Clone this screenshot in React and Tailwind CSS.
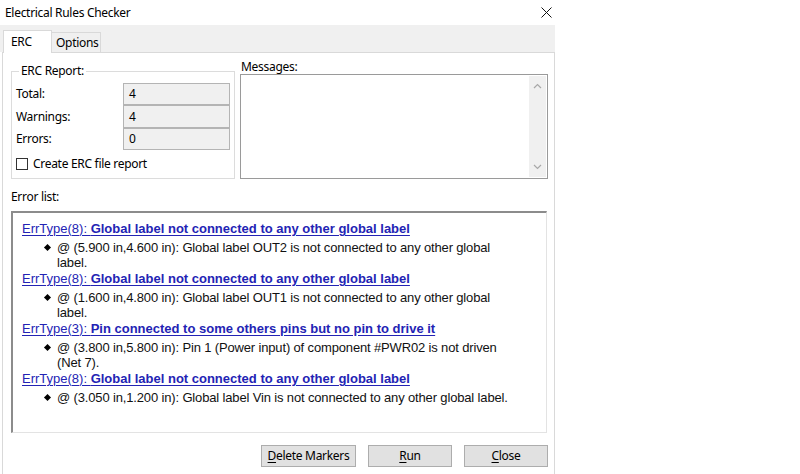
import React from "react";

const errors = [
    {
        type: 8,
        title: "Global label not connected to any other global label",
        lines: [
            "@ (5.900 in,4.600 in): Global label OUT2 is not connected to any other global",
            "label.",
        ],
    },
    {
        type: 8,
        title: "Global label not connected to any other global label",
        lines: [
            "@ (1.600 in,4.800 in): Global label OUT1 is not connected to any other global",
            "label.",
        ],
    },
    {
        type: 3,
        title: "Pin connected to some others pins but no pin to drive it",
        lines: [
            "@ (3.800 in,5.800 in): Pin 1 (Power input) of component #PWR02 is not driven",
            "(Net 7).",
        ],
    },
    {
        type: 8,
        title: "Global label not connected to any other global label",
        lines: ["@ (3.050 in,1.200 in): Global label Vin is not connected to any other global label."],
    },
];

function ReportRow({ label, value, h }) {
    return (
        <div className="flex items-center">
            <span className="w-[107px]">{label}</span>
            <div className={`w-[107px] ${h} border border-[#b4b4b4] bg-[#f0f0f0] flex items-center pl-[5px]`}>
                {value}
            </div>
        </div>
    );
}

function WinButton({ first, rest, width }) {
    return (
        <button className={`${width} h-[22px] bg-[#e1e1e1] border border-[#adadad] text-[12px] leading-none flex items-center justify-center`}>
            <span className="underline underline-offset-2">{first}</span>
            <span className="whitespace-pre">{rest}</span>
        </button>
    );
}

export default function App() {
    return (
        <div className="w-[800px] h-[474px] bg-white overflow-hidden text-black text-[12px] tracking-[-0.3px] font-['Noto_Sans',sans-serif]">
            <div className="w-[556px]">
                {/* Title bar */}
                <div className="h-[25px] flex items-center justify-between pl-[5px] pr-[4px]">
                    <span className="leading-none">Electrical Rules Checker</span>
                    <svg width="11" height="11" viewBox="0 0 11 11">
                        <path d="M0.5 0.5 L10.5 10.5 M10.5 0.5 L0.5 10.5" stroke="#111" strokeWidth="1" />
                    </svg>
                </div>

                {/* Tabs */}
                <div className="h-[27px] bg-[#f0f0f0] flex items-end pl-[3px] w-[555px]">
                    <div className="relative z-10 -mb-px w-[49px] h-[23px] bg-white border-x border-t border-[#d9d9d9] pl-[7px] pt-[3px] leading-[16px]">
                        ERC
                    </div>
                    <div className="w-[49px] h-[20px] border-r border-t border-[#d9d9d9] pl-[4px] pt-[2px] leading-[16px]">
                        Options
                    </div>
                </div>

                {/* Panel */}
                <div className="ml-[2px] w-[553px] h-[422px] bg-white border-l border-r border-t border-[#d9d9d9] pl-[8px] pt-[6px]">
                    <div className="flex gap-[5px]">
                        <fieldset className="mt-[4px] w-[224px] h-[116px] border border-[#dcdcdc] px-[4px]">
                            <legend className="ml-[3px] px-[2px] leading-[16px]">ERC Report:</legend>
                            <div className="mt-[4px] flex flex-col">
                                <ReportRow label="Total:" value="4" h="h-[22px]" />
                                <ReportRow label="Warnings:" value="4" h="h-[23px]" />
                                <ReportRow label="Errors:" value="0" h="h-[22px]" />
                            </div>
                            <label className="mt-[7px] flex items-center gap-[5px] leading-[14px]">
                                <span className="w-[12px] h-[12px] border border-[#333] bg-white" />
                                Create ERC file report
                            </label>
                        </fieldset>

                        <div className="flex flex-col">
                            <span className="pl-[1px] leading-[15px]">Messages:</span>
                            <div className="w-[308px] h-[105px] border border-[#9a9a9a] bg-white flex justify-end p-px">
                                <div className="w-[17px] h-full bg-[#f0f0f0] flex flex-col items-center justify-between py-[7px]">
                                    <svg width="9" height="6" viewBox="0 0 9 6">
                                        <path d="M1 5 L4.5 1.5 L8 5" fill="none" stroke="#a8a8a8" strokeWidth="1.2" />
                                    </svg>
                                    <svg width="9" height="6" viewBox="0 0 9 6">
                                        <path d="M1 1 L4.5 4.5 L8 1" fill="none" stroke="#a8a8a8" strokeWidth="1.2" />
                                    </svg>
                                </div>
                            </div>
                        </div>
                    </div>

                    <div className="mt-[10px] leading-[16px]">Error list:</div>

                    {/* Error list */}
                    <div className="mt-[6px] w-[536px] h-[222px] border-t-2 border-l-2 border-t-[#8c8c8c] border-l-[#8c8c8c] border-r border-b border-r-[#e3e3e3] border-b-[#e3e3e3] bg-white pl-[9px] pt-[7px] tracking-normal font-['Liberation_Sans',Arial,sans-serif] text-[13px]">
                        {errors.map((err, i) => (
                            <div key={i}>
                                <div className="leading-[18px] text-[#2323b4] underline underline-offset-[2px] whitespace-nowrap">
                                    ErrType({err.type}): <span className="font-bold">{err.title}</span>
                                </div>
                                <div className="mt-[2px] flex pl-[23px]">
                                    <div className="w-[12px] pt-[5px]">
                                        <div className="w-[5px] h-[5px] bg-black rotate-45" />
                                    </div>
                                    <div className="leading-[15px] text-[#111] tracking-[-0.15px]">
                                        {err.lines.map((line, j) => (
                                            <div key={j} className="whitespace-nowrap">{line}</div>
                                        ))}
                                    </div>
                                </div>
                            </div>
                        ))}
                    </div>

                    {/* Buttons */}
                    <div className="mt-[12px] flex gap-[12px] pl-[250px]">
                        <WinButton first="D" rest="elete Markers" width="w-[95px]" />
                        <WinButton first="R" rest="un" width="w-[84px]" />
                        <WinButton first="C" rest="lose" width="w-[84px]" />
                    </div>
                </div>
            </div>
        </div>
    );
}
